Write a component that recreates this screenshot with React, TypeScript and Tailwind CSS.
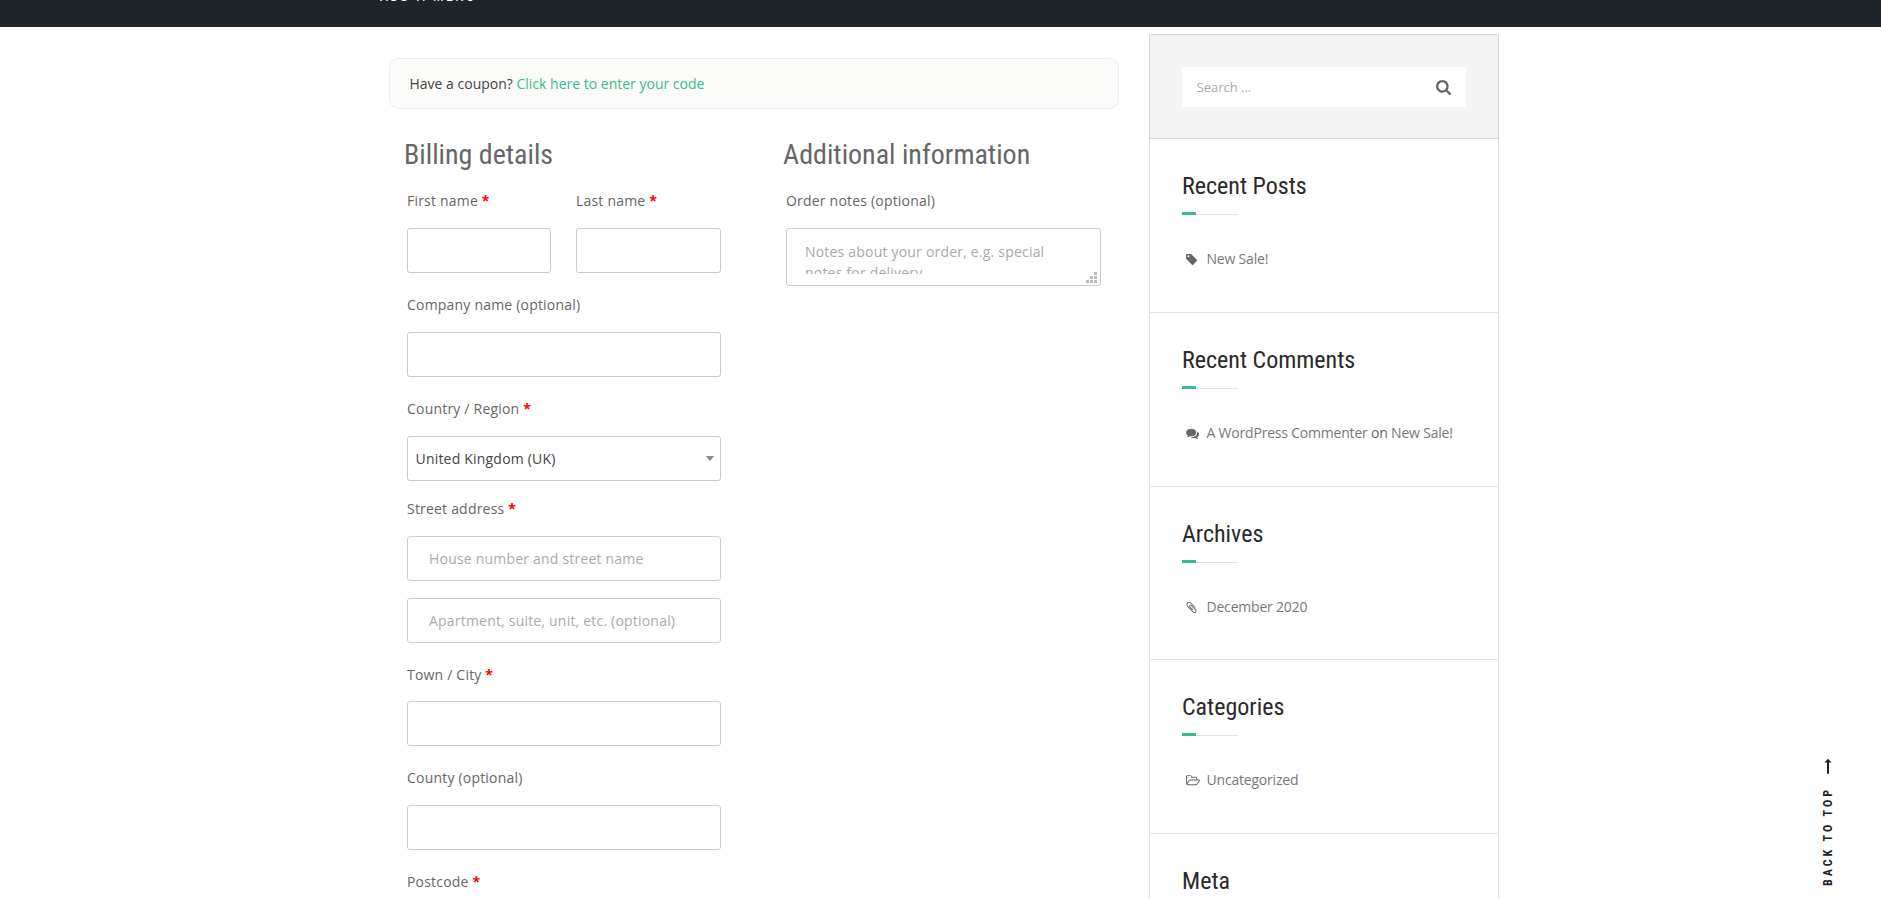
import type { ReactNode } from 'react';

const ICONS = {
  search: {
    box: '64 128 1664 1664',
    d: 'M1216 832q0-185-131.5-316.5t-316.5-131.5-316.5 131.5-131.5 316.5 131.5 316.5 316.5 131.5 316.5-131.5 131.5-316.5zm512 832q0 52-38 90t-90 38q-54 0-90-38l-343-342q-179 124-399 124-143 0-273.5-55.5t-225-150-150-225-55.5-273.5 55.5-273.5 150-225 225-150 273.5-55.5 273.5 55.5 225 150 150 225 55.5 273.5q0 220-124 399l343 343q37 37 37 90z',
  },
  tag: {
    box: '128 0 2048 1792',
    d: 'M576 448q0-53-37.5-90.5t-90.5-37.5-90.5 37.5-37.5 90.5 37.5 90.5 90.5 37.5 90.5-37.5 37.5-90.5zm1067 576q0 53-37 90l-491 492q-39 37-91 37-53 0-90-37l-715-716q-38-37-64.5-101t-26.5-117v-416q0-52 38-90t90-38h416q53 0 117 26.5t102 64.5l715 714q37 39 37 91z',
  },
  comments: {
    box: '0 0 2048 1792',
    d: 'M1408 768q0 139-94 257t-256.5 186.5-353.5 68.5q-86 0-176-16-124 88-278 128-36 9-86 16h-3q-11 0-20.5-8t-11.5-21q-1-3-1-6.5t.5-6.5 2-6l2.5-5 3.5-5.5 4-5 4.5-5 4-4.5q5-6 23-25t26-29.5 22.5-29 25-38.5 20.5-44q-124-72-195-177t-71-224q0-139 94-257t256.5-186.5 353.5-68.5 353.5 68.5 256.5 186.5 94 257zm384 256q0 120-71 224.5t-195 176.5q10 24 20.5 44t25 38.5 22.5 29 26 29.5 23 25q1 1 4 4.5t4.5 5 4 5 3.5 5.5l2.5 5 2 6 .5 6.5-1 6.5q-3 14-13 22t-22 7q-50-7-86-16-154-40-278-128-90 16-176 16-271 0-472-132 58 4 88 4 161 0 309-45t264-129q125-92 192-212t67-254q0-77-23-152 129 71 204 178t75 230z',
  },
  clip: {
    box: '150 0 2048 1792',
    d: 'M1596 1385q0 117-79 196t-196 79q-135 0-235-100l-777-776q-113-115-113-271 0-159 110-270t269-111q158 0 273 113l605 606q10 10 10 22 0 16-30.5 46.5t-46.5 30.5q-13 0-23-10l-606-607q-79-77-181-77-106 0-179 75t-73 181q0 105 76 181l776 777q63 63 145 63 64 0 106-42t42-106q0-82-63-145l-581-581q-26-24-60-24-29 0-48 19t-19 48q0 32 25 59l410 410q10 10 10 22 0 16-31 47t-47 31q-12 0-22-10l-410-410q-63-61-63-149 0-82 57-139t139-57q88 0 149 63l581 581q100 98 100 235z',
  },
  folder: {
    box: '64 0 2048 1792',
    d: 'M1845 931q0-35-53-35h-1088q-40 0-85.5 21.5t-71.5 52.5l-294 363q-18 24-18 40 0 35 53 35h1088q40 0 86-22t71-53l294-363q18-22 18-39zm-1141-163h768v-160q0-40-28-68t-68-28h-576q-40 0-68-28t-28-68v-64q0-40-28-68t-68-28h-320q-40 0-68 28t-28 68v853l256-315q44-53 116-87.5t140-34.5zm1269 163q0 62-46 120l-295 363q-43 53-116 87.5t-140 34.5h-1088q-92 0-158-66t-66-158v-960q0-92 66-158t158-66h320q92 0 158 66t66 158v32h544q92 0 158 66t66 158v160h192q54 0 99 24.5t67 70.5q15 32 15 68z',
  },
};

function Icon({ name, className }: { name: keyof typeof ICONS; className: string }) {
  return (
    <svg viewBox={ICONS[name].box} className={className} fill="currentColor" aria-hidden="true">
      <path d={ICONS[name].d} />
    </svg>
  );
}

const CONDENSED = "font-['Roboto_Condensed','Roboto',sans-serif] [font-stretch:75%]";

function Label({ children, required }: { children: ReactNode; required?: boolean }) {
  return (
    <label className="block h-6 whitespace-nowrap text-sm leading-6 tracking-[0.2px] text-[#666]">
      {children}
      {required && <span className="font-bold text-[#f00]"> *</span>}
    </label>
  );
}

const FIELD =
  'block h-[45px] w-full rounded-[3px] border border-[#ccc] bg-white px-[21px] text-sm tracking-[0.2px] text-[#444] placeholder:text-[#aaa] outline-none';

function Widget({ title, icon, children, height }: { title: string; icon?: ReactNode; children?: ReactNode; height: string }) {
  return (
    <section className={`box-border border-b border-black/11 pl-8 pt-8 ${height}`}>
      <h3 className={`text-2xl leading-[30px] text-[#2a2a2a] ${CONDENSED}`}>{title}</h3>
      <div className="mt-[11px] flex h-[3px] w-14 items-end">
        <span className="h-[3px] w-3.5 bg-[#35bd92]" />
        <span className="h-px flex-1 bg-[#e2e2e2]" />
      </div>
      <div className="mt-8 flex h-6 items-center pl-1 text-sm leading-6 tracking-[-0.2px] text-[#777]">
        <span className="w-[20.5px] text-[#666]">{icon}</span>
        <span className="whitespace-nowrap">{children}</span>
      </div>
    </section>
  );
}

export default function App() {
  return (
    <div className="relative flex h-[899px] w-[1881px] flex-col overflow-hidden bg-white font-['Open_Sans',sans-serif]">
      <header className="flex h-[27px] shrink-0 items-start overflow-hidden bg-[#1e252b] pl-[380px]">
        <span className={`-mt-[14px] h-5 text-sm leading-5 tracking-[2.4px] text-white ${CONDENSED}`}>ADD A MENU</span>
      </header>

      <div className="flex min-h-0 flex-1">
        <main className="ml-[389px] w-[730px] pt-[31px]">
          <div className="flex h-[51px] items-center rounded-[10px] border border-dotted border-[#ddd] bg-[#fbfbf9] pl-[19.5px] text-sm leading-6 text-[#444]">
            <span>
              Have a coupon? <a className="text-[#35bd92]">Click here to enter your code</a>
            </span>
          </div>

          <div className="flex">
            <div className="ml-[15px] w-[317px] pt-7">
              <h3 className={`h-[35px] whitespace-nowrap text-[28px] leading-[35px] text-[#666] ${CONDENSED}`}>
                Billing details
              </h3>
              <div className="ml-[3px] mt-[17px] w-[314px]">
                <div className="flex justify-between">
                  <div className="w-[144px]">
                    <Label required>First name</Label>
                    <input className={`mt-[15px] ${FIELD}`} />
                  </div>
                  <div className="w-[145px]">
                    <Label required>Last name</Label>
                    <input className={`mt-[15px] ${FIELD}`} />
                  </div>
                </div>
                <div className="mt-5">
                  <Label>Company name (optional)</Label>
                  <input className={`mt-[15px] ${FIELD}`} />
                </div>
                <div className="mt-5">
                  <Label required>Country / Region</Label>
                  <div className="mt-[15px] flex h-[45px] items-center justify-between rounded-[3px] border border-[#ccc] pl-[7.5px] pr-[6px] text-sm tracking-[0.2px] text-[#444]">
                    <span>United Kingdom (UK)</span>
                    <svg viewBox="0 0 8 5" className="h-[5px] w-2" fill="#888">
                      <path d="M0 0h8L4 5z" />
                    </svg>
                  </div>
                </div>
                <div className="mt-4">
                  <Label required>Street address</Label>
                  <input className={`mt-[15px] ${FIELD}`} placeholder="House number and street name" />
                  <input className={`mt-[17px] ${FIELD}`} placeholder="Apartment, suite, unit, etc. (optional)" />
                </div>
                <div className="mt-5">
                  <Label required>Town / City</Label>
                  <input className={`mt-[14px] ${FIELD}`} />
                </div>
                <div className="mt-5">
                  <Label>County (optional)</Label>
                  <input className={`mt-[15px] ${FIELD}`} />
                </div>
                <div className="mt-5">
                  <Label required>Postcode</Label>
                </div>
              </div>
            </div>

            <div className="ml-[62px] pt-7">
              <h3 className={`h-[35px] whitespace-nowrap text-[28px] leading-[35px] text-[#666] ${CONDENSED}`}>
                Additional information
              </h3>
              <div className="ml-[3px] mt-[17px] w-[315px]">
                <Label>Order notes (optional)</Label>
                <div className="relative mt-[15px] h-[58px] rounded-[3px] border border-[#ccc] px-[18px] pt-3">
                  <p className="h-[33px] w-[250px] overflow-hidden text-sm leading-[21px] tracking-[0.2px] text-[#aaa]">
                    Notes about your order, e.g. special notes for delivery.
                  </p>
                  <svg viewBox="0 0 11 11" className="absolute bottom-[2px] right-[3px] size-[11px]" fill="#bbb">
                    <path d="M8 0h3v3h-3zM4 4h3v3h-3zM8 4h3v3h-3zM0 8h3v3h-3zM4 8h3v3h-3zM8 8h3v3h-3z" />
                  </svg>
                </div>
              </div>
            </div>
          </div>
        </main>

        <aside className="ml-[30px] mt-[7px] w-[350px]">
          <div className="h-[105px] border border-[#dadada] bg-[#f4f4f4] px-8 pt-8">
            <div className="flex h-10 items-center justify-between bg-white pl-[14.5px] pr-[15px]">
              <span className="pt-px text-[13px] text-[#aaa]">Search ...</span>
              <Icon name="search" className="mt-px size-[15px] text-[#666]" />
            </div>
          </div>
          <div className="border-x border-[#e2e2e2]">
            <Widget height="h-[174px]" title="Recent Posts" icon={<Icon name="tag" className="h-[13px] w-[15px]" />}>
              New Sale!
            </Widget>
            <Widget height="h-[174px]" title="Recent Comments" icon={<Icon name="comments" className="h-[13px] w-[15px]" />}>
              A WordPress Commenter <span className="text-[#666]">on</span> New Sale!
            </Widget>
            <Widget height="h-[173px]" title="Archives" icon={<Icon name="clip" className="h-[13px] w-[15px]" />}>
              December 2020
            </Widget>
            <Widget height="h-[174px]" title="Categories" icon={<Icon name="folder" className="h-[13px] w-[15px]" />}>
              Uncategorized
            </Widget>
            <Widget height="h-[174px]" title="Meta" />
          </div>
        </aside>
      </div>

      <a className="absolute left-[1818px] top-[758px] flex w-5 flex-col items-center text-[#222]">
        <svg viewBox="0 0 8 16" className="mr-px h-4 w-2" fill="currentColor">
          <path d="M4 0.8L7.6 4.6H5v11.2H3V4.6H0.4z" />
        </svg>
        <span
          className={`mt-[13px] rotate-180 whitespace-nowrap text-[12px] font-bold leading-5 tracking-[3px] [writing-mode:vertical-rl] ${CONDENSED}`}
        >
          BACK TO TOP
        </span>
      </a>
    </div>
  );
}
